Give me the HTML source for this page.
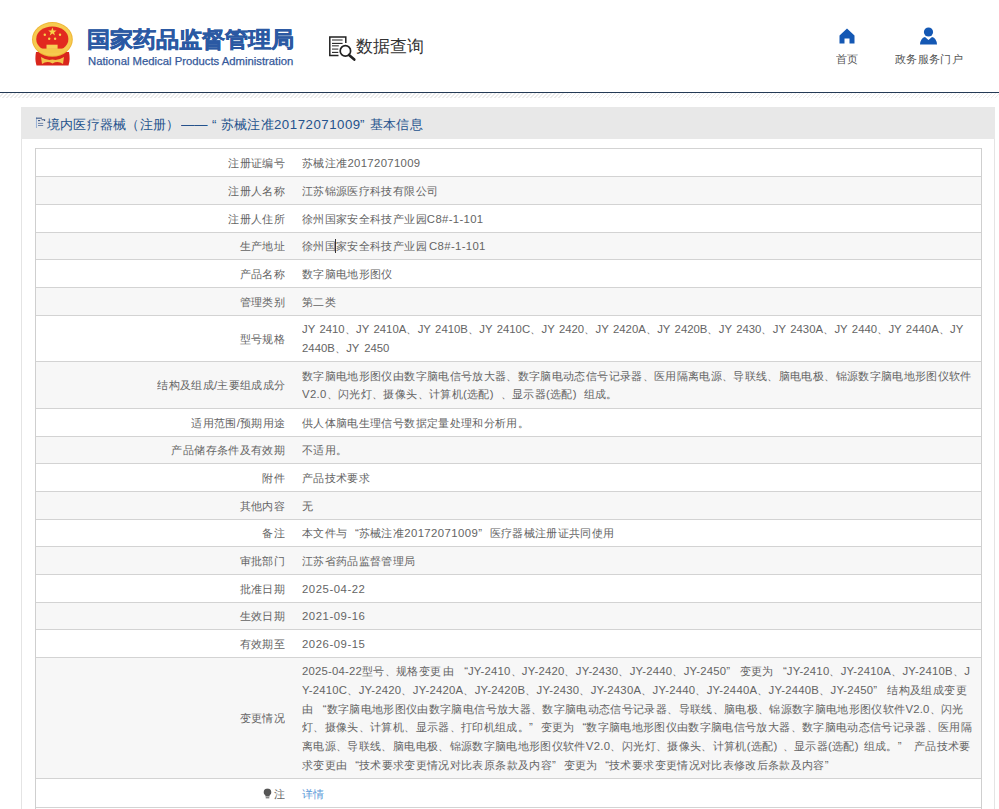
<!DOCTYPE html>
<html><head><meta charset="utf-8">
<style>
*{margin:0;padding:0;box-sizing:border-box}
html,body{width:999px;height:809px;overflow:hidden;background:#fff;font-family:"Liberation Sans",sans-serif}
.abs{position:absolute}
#hdr{position:absolute;left:0;top:0;width:999px;height:92px;background:#fff}
#bline{position:absolute;left:0;top:92px;width:999px;height:1px;background:#243a55}
#hatch{position:absolute;left:0;top:93px;width:999px;height:5px;background:repeating-linear-gradient(135deg,#fff 0,#fff 1.9px,#ebebeb 1.9px,#ebebeb 2.83px)}
.t1{position:absolute;left:87px;top:23px;font-size:23px;font-weight:bold;color:#2b59a3;white-space:nowrap;line-height:32px;-webkit-text-stroke:0.5px #2b59a3;transform:scaleY(0.95);transform-origin:0 50%}
.t2{position:absolute;left:88px;top:53px;font-size:11.3px;color:#35599a;white-space:nowrap;line-height:16px;-webkit-text-stroke:0.25px #35599a}
.sq{position:absolute;left:356px;top:32.5px;font-size:17px;color:#333;white-space:nowrap;line-height:28px}
.nav{position:absolute;font-size:12px;transform:scale(0.946);transform-origin:0 0;color:#555;white-space:nowrap;line-height:16px}
#panel{position:absolute;left:21px;top:107px;width:974px;height:702px;background:#fff;border-left:1px solid #e4e4e4;border-right:1px solid #e4e4e4}
#ptitle{position:absolute;left:21px;top:107px;width:974px;height:32px;background:#e8e8e8}
.ptt{position:absolute;top:113px;font-size:14px;line-height:22px;color:#24528c;white-space:nowrap;transform:scale(0.946);transform-origin:0 50%}
#tbl{position:absolute;left:35px;top:148px;width:947px;height:661px;border:1px solid #cfcfcf;border-bottom:none}
.row{position:absolute;left:36px;width:945px;border-top:1px solid #d3d3d3}
.g{background:#f7f7f7}
.lb{position:absolute;right:714px;font-size:12px;line-height:20px;color:#646464;white-space:nowrap;text-align:right;transform:scale(0.946);transform-origin:100% 50%}
.vl{position:absolute;left:302px;font-size:12px;line-height:20px;color:#646464;white-space:nowrap;transform:scale(0.946);transform-origin:0 50%}
.ql{display:inline-block;width:12px;text-align:right}
.qr{display:inline-block;width:12px;text-align:left}
.sp{display:inline-block}
</style></head><body>
<div id="hdr"></div>
<svg class="abs" style="left:25px;top:15px" width="60" height="60" viewBox="0 0 60 60">
 <path d="M11 37 Q9.5 44 11.5 50.5 L43.5 50.5 Q45.5 44 44 37Z" fill="#d9261c"/>
 <ellipse cx="27.4" cy="24.4" rx="20.4" ry="17.3" fill="#efb535"/>
 <ellipse cx="27.4" cy="24.4" rx="19.4" ry="16.4" fill="#f6cb50"/>
 <ellipse cx="27.3" cy="24" rx="16.1" ry="12.6" fill="#e2291f"/>
 <rect x="14.8" y="33.6" width="24.5" height="4.2" fill="#f5c84a"/>
 <rect x="21.5" y="29.7" width="11.1" height="4.2" fill="#f7cf55"/>
 <path d="M16 42 Q22 46 27.5 44.5 Q33 46 39 42 L38 49 Q33 45.5 27.5 48.5 Q22 45.5 17 49Z" fill="#f3c24a"/>
 <polygon points="27.4,12.6 28.5,15.6 31.6,15.6 29.1,17.4 30,20.4 27.4,18.6 24.8,20.4 25.7,17.4 23.2,15.6 26.3,15.6" fill="#f7d34a"/>
 <circle cx="19.8" cy="19.8" r="1.2" fill="#f7d34a"/><circle cx="35" cy="19.8" r="1.2" fill="#f7d34a"/>
 <circle cx="24.2" cy="23.8" r="1.2" fill="#f7d34a"/><circle cx="30.1" cy="23.8" r="1.2" fill="#f7d34a"/>
</svg>
<div class="t1">国家药品监督管理局</div>
<div class="t2">National Medical Products Administration</div>
<svg class="abs" style="left:322px;top:30px" width="40" height="36" viewBox="0 0 40 36">
 <path d="M23.8 13V6.9H7.8V25.5H16.5" fill="none" stroke="#222" stroke-width="1.5"/>
 <path d="M10 10H20.6" stroke="#555" stroke-width="1.3"/>
 <path d="M10 13.4H20.6" stroke="#222" stroke-width="1.1"/>
 <path d="M10 15.8H16.8" stroke="#555" stroke-width="1.3"/>
 <path d="M10 19.1H16.3" stroke="#555" stroke-width="1.3"/>
 <path d="M10 22.4H16.3" stroke="#222" stroke-width="1.1"/>
 <circle cx="23.4" cy="20.9" r="5.2" fill="none" stroke="#222" stroke-width="1.7"/>
 <path d="M27 25L32.3 29.6" stroke="#222" stroke-width="2.6" stroke-linecap="round"/>
</svg>
<div class="sq">数据查询</div>
<svg class="abs" style="left:839px;top:28px" width="16" height="16" viewBox="0 0 16 16">
 <path d="M8 0.5L15.5 7.5V15.5H10.5V10.5H5.5V15.5H0.5V7.5Z" fill="#1458b4"/>
</svg>
<div class="nav" style="left:836px;top:51.5px">首页</div>
<svg class="abs" style="left:920px;top:27px" width="17" height="18" viewBox="0 0 17 18">
 <circle cx="8.5" cy="5" r="4.6" fill="#1458b4"/>
 <path d="M0 17.5Q0.5 11 5 10L8.5 13L12 10Q16.5 11 17 17.5Z" fill="#1458b4"/>
</svg>
<div class="nav" style="left:895px;top:51.5px">政务服务门户</div>
<div id="bline"></div>
<div id="hatch"></div>
<div id="panel"></div>
<div id="ptitle"></div>
<svg class="abs" style="left:35px;top:117px" width="11" height="12" viewBox="0 0 11 12">
 <path d="M1.5 0.5V11" stroke="#9db4d8" stroke-width="1.1"/>
 <path d="M1 1.2H7" stroke="#4a6590" stroke-width="1.2"/>
 <path d="M6.5 2.8H9.6V4" fill="none" stroke="#3c5580" stroke-width="1.1"/>
 <path d="M3 3.6H5.2" stroke="#3c5580" stroke-width="1.1"/>
 <path d="M3 6.4H8.2M3 8.5H8.2" stroke="#6f84a8" stroke-width="1"/>
</svg>
<div class="ptt" style="left:47px">境内医疗器械（注册）</div>
<div class="ptt" style="left:181px">——</div>
<div class="ptt" style="left:212px">“</div>
<div class="ptt" style="left:221px">苏械注准<span style="letter-spacing:0.55px">20172071009</span></div>
<div class="ptt" style="left:360px">”</div>
<div class="ptt" style="left:370px">基本信息</div>
<div id="tbl"></div>

<div class="row" style="top:148px;height:28px"></div>
<div class="lb" style="top:152.50px">注册证编号</div>
<div class="vl" id="v0" style="top:152.50px">苏械注准<span class="L" style="letter-spacing:0.350px">20172071009</span></div>
<div class="row g" style="top:176px;height:28px"></div>
<div class="lb" style="top:180.50px">注册人名称</div>
<div class="vl" id="v1" style="top:180.50px">江苏锦源医疗科技有限公司</div>
<div class="row" style="top:204px;height:28px"></div>
<div class="lb" style="top:208.50px">注册人住所</div>
<div class="vl" id="v2" style="top:208.50px">徐州国家安全科技产业园<span class="L" style="letter-spacing:0.350px">C8#-1-101</span></div>
<div class="row g" style="top:232px;height:27px"></div>
<div class="lb" style="top:236.00px">生产地址</div>
<div class="vl" id="v3" style="top:236.00px">徐州国家安全科技产业园<span class="sp" style="width:2.34px"></span><span class="L" style="letter-spacing:0.350px">C8#-1-101</span></div>
<div class="row" style="top:259px;height:28px"></div>
<div class="lb" style="top:263.50px">产品名称</div>
<div class="vl" id="v4" style="top:263.50px">数字脑电地形图仪</div>
<div class="row g" style="top:287px;height:28px"></div>
<div class="lb" style="top:291.50px">管理类别</div>
<div class="vl" id="v5" style="top:291.50px">第二类</div>
<div class="row" style="top:315px;height:46px"></div>
<div class="lb" style="top:328.50px">型号规格</div>
<div class="vl" id="v6" style="top:319.15px"><span class="L" style="letter-spacing:0.000px">JY</span><span class="sp" style="width:4.41px"></span><span class="L" style="letter-spacing:0.000px">2410</span>、<span class="L" style="letter-spacing:0.000px">JY</span><span class="sp" style="width:4.41px"></span><span class="L" style="letter-spacing:0.000px">2410A</span>、<span class="L" style="letter-spacing:0.000px">JY</span><span class="sp" style="width:4.41px"></span><span class="L" style="letter-spacing:0.000px">2410B</span>、<span class="L" style="letter-spacing:0.000px">JY</span><span class="sp" style="width:4.41px"></span><span class="L" style="letter-spacing:0.000px">2410C</span>、<span class="L" style="letter-spacing:0.000px">JY</span><span class="sp" style="width:4.41px"></span><span class="L" style="letter-spacing:0.000px">2420</span>、<span class="L" style="letter-spacing:0.000px">JY</span><span class="sp" style="width:4.41px"></span><span class="L" style="letter-spacing:0.000px">2420A</span>、<span class="L" style="letter-spacing:0.000px">JY</span><span class="sp" style="width:4.41px"></span><span class="L" style="letter-spacing:0.000px">2420B</span>、<span class="L" style="letter-spacing:0.000px">JY</span><span class="sp" style="width:4.41px"></span><span class="L" style="letter-spacing:0.000px">2430</span>、<span class="L" style="letter-spacing:0.000px">JY</span><span class="sp" style="width:4.41px"></span><span class="L" style="letter-spacing:0.000px">2430A</span>、<span class="L" style="letter-spacing:0.000px">JY</span><span class="sp" style="width:4.41px"></span><span class="L" style="letter-spacing:0.000px">2440</span>、<span class="L" style="letter-spacing:0.000px">JY</span><span class="sp" style="width:4.41px"></span><span class="L" style="letter-spacing:0.000px">2440A</span>、<span class="L" style="letter-spacing:0.000px">JY</span></div>
<div class="vl" id="v7" style="top:337.85px"><span class="L" style="letter-spacing:0.000px">2440B</span>、<span class="L" style="letter-spacing:0.000px">JY</span><span class="sp" style="width:4.99px"></span><span class="L" style="letter-spacing:0.000px">2450</span></div>
<div class="row g" style="top:361px;height:47px"></div>
<div class="lb" style="top:375.00px">结构及组成/主要组成成分</div>
<div class="vl" id="v8" style="top:365.65px">数字脑电地形图仪由数字脑电信号放大器、数字脑电动态信号记录器、医用隔离电源、导联线、脑电电极、锦源数字脑电地形图仪软件</div>
<div class="vl" id="v9" style="top:384.35px"><span class="L" style="letter-spacing:0.350px">V2.0</span>、闪光灯、摄像头、计算机<span class="L" style="letter-spacing:0.350px">(</span>选配<span class="L" style="letter-spacing:0.350px">)</span><span class="sp" style="width:7.10px"></span>、显示器<span class="L" style="letter-spacing:0.350px">(</span>选配<span class="L" style="letter-spacing:0.350px">)</span><span class="sp" style="width:7.10px"></span>组成。</div>
<div class="row" style="top:408px;height:28px"></div>
<div class="lb" style="top:412.50px">适用范围/预期用途</div>
<div class="vl" id="v10" style="top:412.50px">供人体脑电生理信号数据定量处理和分析用。</div>
<div class="row g" style="top:436px;height:27px"></div>
<div class="lb" style="top:440.00px">产品储存条件及有效期</div>
<div class="vl" id="v11" style="top:440.00px">不适用。</div>
<div class="row" style="top:463px;height:28px"></div>
<div class="lb" style="top:467.50px">附件</div>
<div class="vl" id="v12" style="top:467.50px">产品技术要求</div>
<div class="row g" style="top:491px;height:28px"></div>
<div class="lb" style="top:495.50px">其他内容</div>
<div class="vl" id="v13" style="top:495.50px">无</div>
<div class="row" style="top:519px;height:27px"></div>
<div class="lb" style="top:523.00px">备注</div>
<div class="vl" id="v14" style="top:523.00px">本文件与<span class="ql">“</span>苏械注准<span class="L" style="letter-spacing:0.446px">20172071009</span><span class="qr">”</span>医疗器械注册证共同使用</div>
<div class="row g" style="top:546px;height:28px"></div>
<div class="lb" style="top:550.50px">审批部门</div>
<div class="vl" id="v15" style="top:550.50px">江苏省药品监督管理局</div>
<div class="row" style="top:574px;height:28px"></div>
<div class="lb" style="top:578.50px">批准日期</div>
<div class="vl" id="v16" style="top:578.50px"><span class="L" style="letter-spacing:0.561px">2025-04-22</span></div>
<div class="row g" style="top:602px;height:27px"></div>
<div class="lb" style="top:606.00px">生效日期</div>
<div class="vl" id="v17" style="top:606.00px"><span class="L" style="letter-spacing:0.561px">2021-09-16</span></div>
<div class="row" style="top:629px;height:28px"></div>
<div class="lb" style="top:633.50px">有效期至</div>
<div class="vl" id="v18" style="top:633.50px"><span class="L" style="letter-spacing:0.561px">2026-09-15</span></div>
<div class="row g" style="top:657px;height:121px"></div>
<div class="lb" style="top:708.00px">变更情况</div>
<div class="vl" id="v19" style="top:661.25px"><span class="L" style="letter-spacing:0.201px">2025-04-22</span>型号、规格变更<span class="sp" style="width:2.00px"></span>由<span class="sp" style="width:2.00px"></span><span class="ql">“</span><span class="L" style="letter-spacing:0.201px">JY-2410</span>、<span class="L" style="letter-spacing:0.201px">JY-2420</span>、<span class="L" style="letter-spacing:0.201px">JY-2430</span>、<span class="L" style="letter-spacing:0.201px">JY-2440</span>、<span class="L" style="letter-spacing:0.201px">JY-2450</span><span class="qr">”</span><span class="sp" style="width:2.00px"></span>变更为<span class="sp" style="width:2.00px"></span><span class="ql">“</span><span class="L" style="letter-spacing:0.201px">JY-2410</span>、<span class="L" style="letter-spacing:0.201px">JY-2410A</span>、<span class="L" style="letter-spacing:0.201px">JY-2410B</span>、<span class="L" style="letter-spacing:0.201px">J</span></div>
<div class="vl" id="v20" style="top:679.95px"><span class="L" style="letter-spacing:0.229px">Y-2410C</span>、<span class="L" style="letter-spacing:0.229px">JY-2420</span>、<span class="L" style="letter-spacing:0.229px">JY-2420A</span>、<span class="L" style="letter-spacing:0.229px">JY-2420B</span>、<span class="L" style="letter-spacing:0.229px">JY-2430</span>、<span class="L" style="letter-spacing:0.229px">JY-2430A</span>、<span class="L" style="letter-spacing:0.229px">JY-2440</span>、<span class="L" style="letter-spacing:0.229px">JY-2440A</span>、<span class="L" style="letter-spacing:0.229px">JY-2440B</span>、<span class="L" style="letter-spacing:0.229px">JY-2450</span><span class="qr">”</span><span class="sp" style="width:2.95px"></span>结构及组成变更</div>
<div class="vl" id="v21" style="top:698.65px">由<span class="sp" style="width:2.00px"></span><span class="ql">“</span>数字脑电地形图仪由数字脑电信号放大器、数字脑电动态信号记录器、导联线、脑电极、锦源数字脑电地形图仪软件<span class="L" style="letter-spacing:0.171px">V2.0</span>、闪光</div>
<div class="vl" id="v22" style="top:717.35px">灯、摄像头、计算机、显示器、打印机组成。<span class="qr">”</span><span class="sp" style="width:0.23px"></span>变更为<span class="sp" style="width:0.23px"></span><span class="ql">“</span>数字脑电地形图仪由数字脑电信号放大器、数字脑电动态信号记录器、医用隔</div>
<div class="vl" id="v23" style="top:736.05px">离电源、导联线、脑电电极、锦源数字脑电地形图仪软件<span class="L" style="letter-spacing:0.350px">V2.0</span>、闪光灯、摄像头、计算机<span class="L" style="letter-spacing:0.350px">(</span>选配<span class="L" style="letter-spacing:0.350px">)</span><span class="sp" style="width:5.16px"></span>、显示器<span class="L" style="letter-spacing:0.350px">(</span>选配<span class="L" style="letter-spacing:0.350px">)</span><span class="sp" style="width:5.16px"></span>组成。<span class="qr">”</span><span class="sp" style="width:5.16px"></span>产品技术要</div>
<div class="vl" id="v24" style="top:754.75px">求变更由<span class="sp" style="width:0.23px"></span><span class="ql">“</span>技术要求变更情况对比表原条款及内容<span class="qr">”</span><span class="sp" style="width:0.23px"></span>变更为<span class="sp" style="width:0.23px"></span><span class="ql">“</span>技术要求变更情况对比表修改后条款及内容<span class="qr">”</span></div>
<div class="row" style="top:778px;height:30px"></div>
<div class="lb" style="top:783.50px"><svg style="vertical-align:-1px;margin-right:2px" width="9" height="11" viewBox="0 0 9 11"><path d="M4.5 0.3C2 0.3 0.4 2 0.4 4.2C0.4 5.8 1.5 6.8 2.3 7.6V8.6H6.7V7.6C7.5 6.8 8.6 5.8 8.6 4.2C8.6 2 7 0.3 4.5 0.3Z" fill="#555"/><rect x="2.6" y="9.4" width="3.8" height="1.3" fill="#666"/></svg>注</div>
<div class="vl" id="v25" style="top:783.50px"><span style="color:#5e9ad8">详情</span></div>
<div class="row" style="top:807px;height:2px"></div>
<div class="abs" style="left:335px;top:239px;width:1px;height:13.5px;background:#333"></div>
</body></html>
